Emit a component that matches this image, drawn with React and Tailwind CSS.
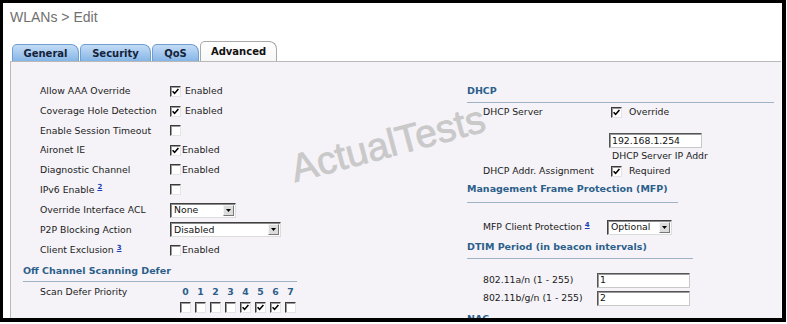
import React from 'react'

function Check({ on }) {
  return (
    <span className="inline-flex h-[11px] w-[11px] shrink-0 items-center justify-center border border-t-[#3a3a3a] border-l-[#3a3a3a] border-r-[#e4e4e4] border-b-[#e4e4e4] bg-white shadow-[inset_1px_1px_0_#9a9a9a]">
      {on && (
        <svg viewBox="0 0 7 7" className="h-[7px] w-[7px]">
          <path d="M0.6 3.2 L2.6 5.4 L6.4 0.9" stroke="#000" strokeWidth="1.6" fill="none" />
        </svg>
      )}
    </span>
  )
}

function Select({ value, className }) {
  return (
    <div className={`flex h-[15px] items-center justify-between border border-t-[#404040] border-l-[#404040] border-r-[#dcdcdc] border-b-[#dcdcdc] bg-white pl-[3px] pr-[1px] shadow-[inset_1px_1px_0_#8c8c8c] ${className}`}>
      <span className="leading-none text-[#111]">{value}</span>
      <span className="flex h-[11px] w-[11px] items-center justify-center border border-t-[#f4f4f4] border-l-[#f4f4f4] border-r-[#777] border-b-[#777] bg-[#dcdcdc]">
        <svg viewBox="0 0 5 3" className="h-[3px] w-[5px]">
          <path d="M0 0 H5 L2.5 3 Z" fill="#000" />
        </svg>
      </span>
    </div>
  )
}

function Input({ value }) {
  return (
    <div className="flex h-[15px] w-[93px] items-center border border-t-[#555] border-l-[#555] border-r-[#c8c8c8] border-b-[#c8c8c8] bg-white pl-[2px] shadow-[inset_1px_1px_0_#999] text-[#111]">
      {value}
    </div>
  )
}

function Sup({ n }) {
  return <sup className="ml-[3px] text-[7px] font-bold text-[#1b3fb5] underline">{n}</sup>
}

function Row({ h, label, children }) {
  return (
    <div className={`flex items-center ${h}`}>
      <div className="w-[147px] shrink-0 pl-[17px]">{label}</div>
      {children}
    </div>
  )
}

function Tab({ label, active, className }) {
  if (active) {
    return (
      <div className={`flex h-[20px] items-center justify-center rounded-tl-[5px] rounded-tr-[8px] border border-b-0 border-[#a9a9a9] bg-gradient-to-b from-white to-[#f7f7f7] text-[10px] font-bold text-[#111] ${className}`}>
        {label}
      </div>
    )
  }
  return (
    <div className={`flex h-[17px] items-center justify-center rounded-tl-[5px] rounded-tr-[8px] border border-b-0 border-[#6f9fd2] bg-gradient-to-b from-[#c4dcf5] to-[#86b6e6] text-[10px] font-bold text-[#14223a] ${className}`}>
      {label}
    </div>
  )
}

export default function App() {
  const priorities = [0, 1, 2, 3, 4, 5, 6, 7]
  const deferOn = [false, false, false, false, true, true, true, false]

  return (
    <div className="relative h-[324px] w-[787px] overflow-hidden bg-white font-['DejaVu_Sans',Verdana,sans-serif] text-[9.3px] text-[#222]">
      <div className="flex h-[322px] w-[786px] flex-col border-t-[3px] border-l-[3px] border-r-[4px] border-b-[4px] border-black">
        <div className="pl-[7px] pt-[6px] font-['Liberation_Sans',Arial,sans-serif] text-[14px] leading-[16px] text-[#707070]">
          WLANs &gt; Edit
        </div>

        <div className="mt-[16px] flex items-end gap-[1px] pl-[9px]">
          <Tab label="General" className="w-[67px]" />
          <Tab label="Security" className="w-[71px]" />
          <Tab label="QoS" className="w-[47px]" />
          <Tab label="Advanced" active className="w-[77px]" />
        </div>

        <div className="mr-[1px] ml-[7px] flex min-h-0 flex-1 overflow-hidden border-t border-l border-[#b9b9b9] bg-[#f5f3f8] pl-[12px] pt-[19px]">
          <div className="w-[444px] shrink-0">
            <Row h="h-[20px]" label="Allow AAA Override">
              <Check on />
              <span className="ml-[4px]">Enabled</span>
            </Row>
            <Row h="h-[20px]" label="Coverage Hole Detection">
              <Check on />
              <span className="ml-[4px]">Enabled</span>
            </Row>
            <Row h="h-[19px]" label="Enable Session Timeout">
              <Check />
            </Row>
            <Row h="h-[20px]" label="Aironet IE">
              <Check on />
              <span className="ml-[1px]">Enabled</span>
            </Row>
            <Row h="h-[19px]" label="Diagnostic Channel">
              <Check />
              <span className="ml-[1px]">Enabled</span>
            </Row>
            <Row h="h-[21px]" label={<span>IPv6 Enable<Sup n="2" /></span>}>
              <Check />
            </Row>
            <Row h="h-[20px]" label="Override Interface ACL">
              <Select value="None" className="w-[66px]" />
            </Row>
            <Row h="h-[19px]" label="P2P Blocking Action">
              <Select value="Disabled" className="w-[111px]" />
            </Row>
            <Row h="h-[22px]" label={<span>Client Exclusion<Sup n="3" /></span>}>
              <Check />
              <span className="ml-[1px]">Enabled</span>
            </Row>

            <div className="flex h-[21px] w-[274px] items-center border-b border-[#9fb3c6] text-[9.5px] font-bold text-[#2c5f8a]">
              Off Channel Scanning Defer
            </div>
            <div className="flex h-[20px] items-center">
              <div className="w-[155px] shrink-0 pl-[17px]">Scan Defer Priority</div>
              {priorities.map((p) => (
                <div key={p} className="w-[15px] text-center font-bold text-[#2c5f8a]">
                  {p}
                </div>
              ))}
            </div>
            <div className="flex h-[11px] items-center pl-[155px]">
              {priorities.map((p) => (
                <div key={p} className="flex w-[15px] justify-center">
                  <Check on={deferOn[p]} />
                </div>
              ))}
            </div>
          </div>

          <div className="flex-1 pr-[7px]">
            <div className="flex h-[22px] items-center border-b border-[#9fb3c6] text-[9.5px] font-bold text-[#2c5f8a]">
              DHCP
            </div>
            <div className="flex h-[18px] items-center">
              <div className="w-[144px] shrink-0 pl-[16px]">DHCP Server</div>
              <Check on />
              <span className="ml-[7px]">Override</span>
            </div>
            <div className="mt-[12px] pl-[142px]">
              <Input value="192.168.1.254" />
            </div>
            <div className="flex h-[16px] items-center pl-[145px]">DHCP Server IP Addr</div>
            <div className="flex h-[14px] items-center">
              <div className="w-[144px] shrink-0 pl-[16px]">DHCP Addr. Assignment</div>
              <Check on />
              <span className="ml-[7px]">Required</span>
            </div>

            <div className="flex h-[25px] w-[211px] items-center border-b border-[#9fb3c6] pb-[2px] text-[9.5px] font-bold text-[#2c5f8a]">
              Management Frame Protection (MFP)
            </div>
            <div className="mt-[14px] flex h-[20px] items-center">
              <div className="w-[140px] shrink-0 pl-[16px]">
                MFP Client Protection<Sup n="4" />
              </div>
              <Select value="Optional" className="w-[65px]" />
            </div>

            <div className="flex h-[22px] w-[226px] items-center border-b border-[#9fb3c6] text-[9.5px] font-bold text-[#2c5f8a]">
              DTIM Period (in beacon intervals)
            </div>
            <div className="mt-[13px] flex h-[16px] items-center">
              <div className="w-[130px] shrink-0 pl-[16px]">802.11a/n (1 - 255)</div>
              <Input value="1" />
            </div>
            <div className="mt-[2px] flex h-[16px] items-center">
              <div className="w-[130px] shrink-0 pl-[16px]">802.11b/g/n (1 - 255)</div>
              <Input value="2" />
            </div>
            <div className="mt-[6px] text-[9.5px] font-bold text-[#2c5f8a]">NAC</div>
          </div>
        </div>
      </div>

      <div className="pointer-events-none absolute left-[285px] top-[122px] w-[206px] -rotate-[15deg] text-center font-['Liberation_Sans',Arial,sans-serif] text-[39px] leading-[44px] text-[#c2c2c2] opacity-85 [-webkit-text-stroke:0.8px_#c2c2c2]">
        ActualTests
      </div>
    </div>
  )
}
